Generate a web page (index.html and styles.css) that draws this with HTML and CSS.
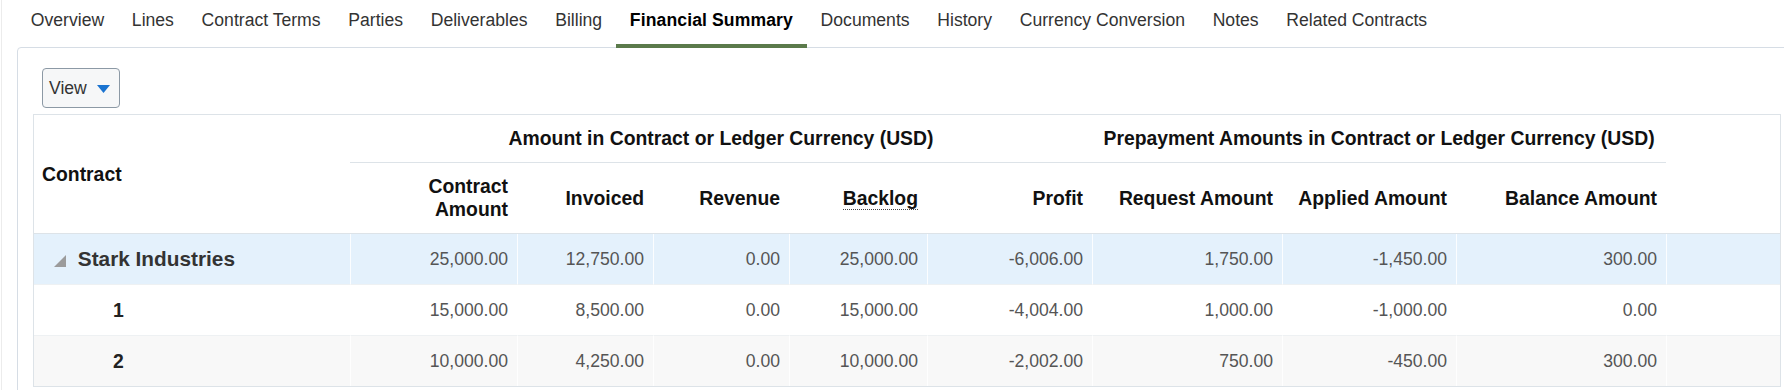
FILE: index.html
```html
<!DOCTYPE html>
<html>
<head>
    <link rel="stylesheet" href="styles.css">
</head>
<body>
    <div class="page">
        <nav class="tabs">
            <a class="tab">Overview</a>
            <a class="tab">Lines</a>
            <a class="tab">Contract Terms</a>
            <a class="tab">Parties</a>
            <a class="tab">Deliverables</a>
            <a class="tab">Billing</a>
            <a class="tab active">Financial Summary</a>
            <a class="tab">Documents</a>
            <a class="tab">History</a>
            <a class="tab">Currency Conversion</a>
            <a class="tab">Notes</a>
            <a class="tab">Related Contracts</a>
        </nav>

        <div class="card">
            <div class="toolbar">
                <button class="view-btn">View
                    <svg width="13" height="8" viewBox="0 0 13 8"><polygon points="0,0 13,0 6.5,8" fill="#1a73d0"/></svg>
                </button>
            </div>

            <table class="summary">
                <colgroup>
                    <col class="c-contract">
                    <col class="c-amount">
                    <col class="c-num">
                    <col class="c-num">
                    <col class="c-backlog">
                    <col class="c-profit">
                    <col class="c-request">
                    <col class="c-applied">
                    <col class="c-balance">
                    <col>
                </colgroup>
                <thead>
                    <tr class="group-row">
                        <th rowspan="2" class="contract-head">Contract</th>
                        <th colspan="5" class="group">Amount in Contract or Ledger Currency (USD)</th>
                        <th colspan="3" class="group">Prepayment Amounts in Contract or Ledger Currency (USD)</th>
                        <th rowspan="2" class="filler"></th>
                    </tr>
                    <tr class="col-row">
                        <th>Contract Amount</th>
                        <th>Invoiced</th>
                        <th>Revenue</th>
                        <th><span class="hint">Backlog</span></th>
                        <th>Profit</th>
                        <th>Request Amount</th>
                        <th>Applied Amount</th>
                        <th>Balance Amount</th>
                    </tr>
                </thead>
                <tbody>
                    <tr class="row-selected">
                        <td class="parent-label">
                            <svg width="12" height="12" viewBox="0 0 12 12"><polygon points="12,0 12,12 0,12" fill="#9b9b9b"/></svg>
                            <span>Stark Industries</span>
                        </td>
                        <td>25,000.00</td>
                        <td>12,750.00</td>
                        <td>0.00</td>
                        <td>25,000.00</td>
                        <td>-6,006.00</td>
                        <td>1,750.00</td>
                        <td>-1,450.00</td>
                        <td>300.00</td>
                        <td></td>
                    </tr>
                    <tr>
                        <td class="child-label">1</td>
                        <td>15,000.00</td>
                        <td>8,500.00</td>
                        <td>0.00</td>
                        <td>15,000.00</td>
                        <td>-4,004.00</td>
                        <td>1,000.00</td>
                        <td>-1,000.00</td>
                        <td>0.00</td>
                        <td></td>
                    </tr>
                    <tr class="row-alt">
                        <td class="child-label">2</td>
                        <td>10,000.00</td>
                        <td>4,250.00</td>
                        <td>0.00</td>
                        <td>10,000.00</td>
                        <td>-2,002.00</td>
                        <td>750.00</td>
                        <td>-450.00</td>
                        <td>300.00</td>
                        <td></td>
                    </tr>
                </tbody>
            </table>
        </div>
    </div>
</body>
</html>
```

FILE: styles.css
```css
* {
    margin: 0;
    padding: 0;
    box-sizing: border-box;
}

html, body {
    overflow: hidden;
}

body {
    background: #fff;
    color: #333;
    font-family: 'Liberation Sans', Arial, sans-serif;
}

.page {
    margin-left: 1px;
    border-left: 1px solid #ececec;
    padding-left: 15px;
    min-height: 100vh;
}

.tabs {
    display: flex;
    height: 48px;
    position: relative;
    z-index: 1;
    margin-bottom: -1px;
}

.tab {
    padding: 10px 13.85px 0;
    font-size: 17.6px;
    line-height: 20px;
    color: #333;
    white-space: nowrap;
    text-decoration: none;
    border-bottom: 4px solid transparent;
    cursor: pointer;
}

.tab.active {
    font-weight: bold;
    color: #000;
    letter-spacing: 0.1px;
    border-bottom-color: #5b7a4b;
}

.card {
    border: 1px solid #d6dde5;
    border-radius: 4px 0 0 0;
    margin-right: -14px;
    padding: 20px 16px 16px 15px;
}

.toolbar {
    padding-left: 9px;
    margin-bottom: 6px;
}

.view-btn {
    display: inline-flex;
    align-items: center;
    gap: 10px;
    height: 40px;
    padding: 0 9px 0 6px;
    border: 1px solid #8c99a5;
    border-radius: 4px;
    background: #f6f7f8;
    color: #333;
    font: 17.6px 'Liberation Sans', Arial, sans-serif;
}

.view-btn svg {
    margin-top: 2px;
}

.summary {
    width: 100%;
    table-layout: fixed;
    border-collapse: separate;
    border-spacing: 0;
    border: 1px solid #dde3e8;
}

.c-contract { width: 316px; }
.c-amount { width: 167px; }
.c-num { width: 136px; }
.c-backlog { width: 138px; }
.c-profit { width: 165px; }
.c-request { width: 190px; }
.c-applied { width: 174px; }
.c-balance { width: 210px; }

.summary th {
    font-size: 19.36px;
    font-weight: bold;
    line-height: 23px;
    color: #111;
}

.group-row .group {
    padding: 12px 9px;
    text-align: center;
    white-space: nowrap;
    border-bottom: 1px solid #dde3e8;
}

.contract-head {
    text-align: left;
    padding-left: 8px;
    vertical-align: middle;
    border-bottom: 1px solid #dde3e8;
}

.filler {
    border-bottom: 1px solid #dde3e8;
}

.col-row th {
    text-align: right;
    vertical-align: middle;
    padding: 12px 9px 12px 4px;
    border-bottom: 1px solid #dde3e8;
}

.hint {
    border-bottom: 1px dotted #444;
}

.summary td {
    height: 51px;
    padding: 0 9px;
    font-size: 17.6px;
    color: #555;
    text-align: right;
    vertical-align: middle;
    white-space: nowrap;
    border-left: 1px solid rgba(255, 255, 255, 0.85);
    border-bottom: 1px solid #eef1f3;
}

.summary td:first-child {
    border-left: none;
}

.summary tbody tr:last-child td {
    height: 50px;
    border-bottom: none;
}

.row-selected td {
    background: #e4f1fc;
}

.row-alt td {
    background: #f8f8f8;
}

.summary .parent-label {
    text-align: left;
    padding-left: 20px;
    font-size: 20.8px;
    font-weight: bold;
    color: #333;
}

.parent-label svg {
    margin-right: 6px;
    vertical-align: -1px;
}

.summary .child-label {
    text-align: left;
    padding-left: 79px;
    font-size: 19.36px;
    font-weight: bold;
    color: #222;
}
```
